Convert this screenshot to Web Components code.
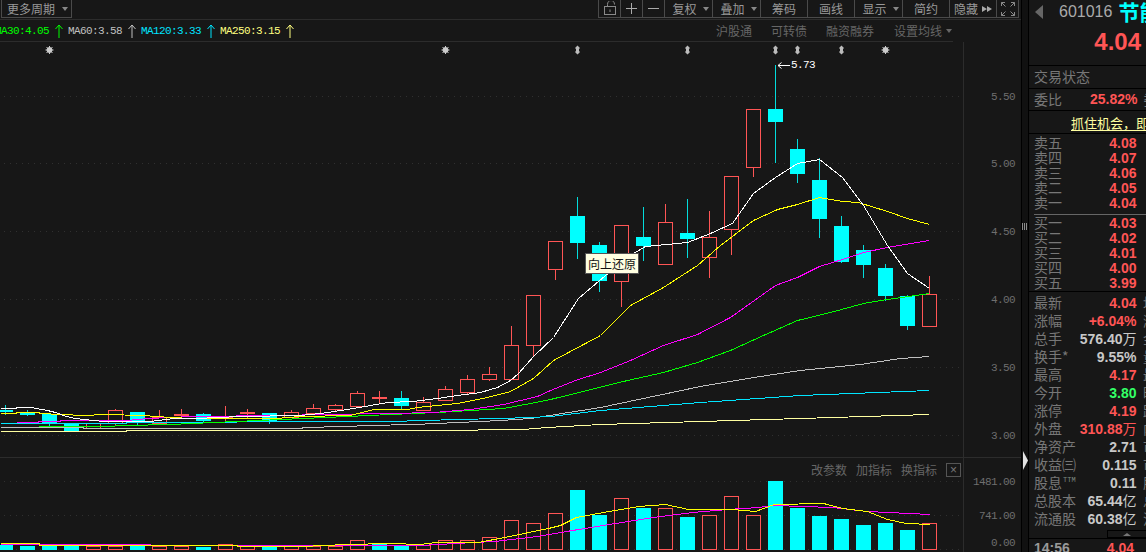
<!DOCTYPE html>
<html lang="zh">
<head>
<meta charset="utf-8">
<title>601016</title>
<style>
  html, body { margin: 0; height: 100%; background: #171717; overflow: hidden; }
  body { font-family: "Noto Sans CJK SC", "Liberation Sans", sans-serif; }
</style>
</head>
<body>
<stock-terminal>
  <chart-pane slot="chart">
    <chart-toolbar slot="toolbar">
      <tool-btn slot="tools" w="22" icon="lock"></tool-btn>
      <tool-btn slot="tools" w="22" icon="plus"></tool-btn>
      <tool-btn slot="tools" w="22" icon="minus"></tool-btn>
      <tool-btn slot="tools" w="48" caret>复权</tool-btn>
      <tool-btn slot="tools" w="48" caret>叠加</tool-btn>
      <tool-btn slot="tools" w="47">筹码</tool-btn>
      <tool-btn slot="tools" w="47">画线</tool-btn>
      <tool-btn slot="tools" w="48" caret>显示</tool-btn>
      <tool-btn slot="tools" w="47">简约</tool-btn>
      <tool-btn slot="tools" w="47" icon="more">隐藏</tool-btn>
      <tool-btn slot="tools" w="22" icon="full"></tool-btn>
    </chart-toolbar>
    <ma-legend slot="legend"></ma-legend>
    <price-chart slot="price"></price-chart>
    <volume-chart slot="volume"></volume-chart>
  </chart-pane>
  <split-bar slot="split"></split-bar>
  <quote-panel slot="quote">
    <quote-row slot="asks" value="4.08" tone="red">卖五</quote-row>
    <quote-row slot="asks" value="4.07" tone="red">卖四</quote-row>
    <quote-row slot="asks" value="4.06" tone="red">卖三</quote-row>
    <quote-row slot="asks" value="4.05" tone="red">卖二</quote-row>
    <quote-row slot="asks" value="4.04" tone="red">卖一</quote-row>
    <quote-row slot="bids" value="4.03" tone="red">买一</quote-row>
    <quote-row slot="bids" value="4.02" tone="red">买二</quote-row>
    <quote-row slot="bids" value="4.01" tone="red">买三</quote-row>
    <quote-row slot="bids" value="4.00" tone="red">买四</quote-row>
    <quote-row slot="bids" value="3.99" tone="red">买五</quote-row>
    <quote-row slot="stats" tall value="4.04" tone="red" side="均价">最新</quote-row>
    <quote-row slot="stats" tall value="+6.04%" tone="red" side="涨跌">涨幅</quote-row>
    <quote-row slot="stats" tall value="576.40" unit="万" side="金额">总手</quote-row>
    <quote-row slot="stats" tall value="9.55%" side="量比">换手*</quote-row>
    <quote-row slot="stats" tall value="4.17" tone="red" side="最低">最高</quote-row>
    <quote-row slot="stats" tall value="3.80" tone="green" side="昨收">今开</quote-row>
    <quote-row slot="stats" tall value="4.19" tone="red" side="跌停">涨停</quote-row>
    <quote-row slot="stats" tall value="310.88" unit="万" tone="red" side="内盘">外盘</quote-row>
    <quote-row slot="stats" tall value="2.71" side="市净">净资产</quote-row>
    <quote-row slot="stats" tall value="0.115" side="市盈">收益㈢</quote-row>
    <quote-row slot="stats" tall value="0.11" side="股息" ttm>股息</quote-row>
    <quote-row slot="stats" tall value="65.44" unit="亿" side="总值">总股本</quote-row>
    <quote-row slot="stats" tall value="60.38" unit="亿" side="流值">流通股</quote-row>
  </quote-panel>
</stock-terminal>

<script>
const RED = '#ff5555';
const CYAN = '#00ffff';
const NUM = '"Liberation Mono", "DejaVu Sans Mono", monospace';
const SANS = '"Liberation Sans", Arial, sans-serif';
const CJK = '"Noto Sans CJK SC", "Liberation Sans", sans-serif';

// candle: center x, body top, body bottom, wick high, wick low, up?
const CANDLES = [
  [5, 410, 411, 405, 414, 0], [27, 413, 414, 410, 415, 0], [49, 414, 422, 414, 426, 0],
  [71, 423, 431, 423, 431, 0], [93, 423, 428, 423, 428, 1], [115, 410, 423, 409, 425, 1],
  [137, 412, 422, 412, 424, 0], [159, 417, 423, 410, 424, 1], [181, 414, 415, 409, 416, 1],
  [203, 414, 420, 413, 421, 0], [225, 417, 418, 406, 420, 1], [247, 412, 413, 409, 417, 1],
  [269, 413, 420, 413, 423, 0], [291, 412, 417, 410, 417, 1], [313, 408, 413, 404, 413, 1],
  [335, 405, 409, 404, 410, 1], [357, 393, 406, 391, 406, 1], [379, 397, 398, 391, 402, 1],
  [401, 398, 405, 391, 408, 0], [423, 402, 410, 397, 410, 1], [445, 389, 400, 386, 400, 1],
  [467, 379, 392, 375, 394, 1], [489, 374, 379, 367, 380, 1], [511, 345, 379, 326, 379, 1],
  [533, 295, 345, 295, 356, 1], [555, 241, 269, 241, 279, 1], [577, 216, 242, 197, 258, 0],
  [599, 245, 280, 242, 291, 0], [621, 225, 281, 225, 306, 1], [643, 237, 245, 207, 260, 0],
  [665, 222, 264, 204, 264, 1], [687, 233, 238, 199, 257, 0], [709, 237, 257, 211, 277, 1],
  [731, 176, 229, 176, 254, 1], [753, 109, 167, 109, 176, 1], [775, 109, 121, 65, 162, 0],
  [797, 149, 173, 139, 182, 0], [819, 180, 218, 158, 237, 0], [841, 226, 261, 216, 262, 0],
  [863, 250, 264, 245, 277, 0], [885, 268, 295, 264, 300, 0], [907, 296, 325, 295, 329, 0],
  [929, 294, 326, 276, 326, 1]
];

const MA_LINES = [
  ['#ffffa0', [[0,431],[126,431],[126,430],[433,430],[523,429],[547,427],[600,424],[700,421],[800,418],[929,414]]],
  ['#c0c0c0', [[0,427],[83,427],[83,428],[302,428],[302,427],[346,426],[368,425],[413,424],[437,423],[457,422],[480,421],[500,420],[530,418],[600,407],[700,386],[760,376],[800,370],[860,364],[900,358],[929,356]]],
  ['#00e5ff', [[0,423],[126,423],[126,422],[236,422],[236,421],[390,421],[457,419],[500,418],[530,417],[550,416],[600,410],[700,402],[800,395],[929,390]]],
  ['#00ff00', [[38,426],[104,426],[126,425],[170,424],[192,423],[258,420],[303,418],[347,416],[390,414],[437,412],[470,410],[503,408],[530,403],[550,399],[627,380],[663,372],[697,362],[730,350],[763,335],[797,320],[830,312],[863,303],[887,299],[929,293]]],
  ['#ff00ff', [[16,422],[38,422],[38,421],[60,421],[60,420],[126,420],[148,418],[170,417],[192,416],[280,415],[323,414],[390,413],[433,412],[470,409],[503,404],[537,396],[550,390],[575,380],[600,372],[630,360],[663,345],[697,334],[730,317],[775,285],[797,277],[819,266],[842,259],[863,252],[887,247],[929,240]]],
  ['#ffff00', [[0,413],[16,413],[16,412],[39,412],[39,413],[61,414],[83,415],[104,414],[143,415],[170,417],[193,418],[275,418],[300,416],[350,415],[373,409],[407,409],[417,407],[437,405],[457,403],[487,397],[510,391],[533,378],[553,360],[600,335],[630,305],[663,287],[697,265],[720,245],[753,220],[777,209],[797,204],[819,197],[842,201],[858,202],[887,211],[907,218],[929,224]]],
  ['#ffffff', [[0,408],[16,408],[16,407],[30,407],[36,408],[47,410],[55,412],[66,416],[75,418],[83,419],[104,421],[150,421],[165,419],[175,418],[195,418],[240,416],[300,415],[320,413],[347,409],[370,405],[387,402],[413,401],[437,398],[457,395],[480,392],[497,387],[510,380],[518,373],[533,356],[553,337],[578,298],[605,275],[630,255],[645,246],[687,242],[710,233],[732,223],[753,193],[775,177],[797,163],[819,159],[842,177],[863,205],[887,245],[907,273],[929,288]]]
];

// volume: center x, top, up?
const VOLUMES = [
  [5,545,0],[27,546,0],[49,545,0],[71,546,0],[93,546,1],[115,546,1],[137,546,0],[159,546,1],[181,546,1],
  [203,547,0],[225,544,1],[247,546,1],[269,547,0],[291,546,1],[313,546,1],[335,546,1],[357,540,1],[379,543,0],
  [401,545,0],[423,545,1],[445,540,1],[467,540,1],[489,537,1],[511,520,1],[533,523,1],[555,513,1],[577,490,0],
  [599,515,0],[621,498,1],[643,508,0],[665,508,1],[687,517,0],[709,515,1],[731,496,1],[753,515,1],[775,481,0],
  [797,508,0],[819,516,0],[841,519,0],[863,525,0],[885,523,0],[907,530,0],[929,523,1]
];

const VOL_LINES = [
  ['#ff00ff', [[0,544],[150,544],[150,545],[420,545],[455,543],[494,541],[537,536],[572,530],[615,523],[653,517],[692,512],[727,509],[758,507],[774,505],[832,507],[867,511],[930,514]]],
  ['#ffff00', [[0,543],[39,543],[39,545],[237,545],[237,546],[302,546],[346,544],[390,543],[420,544],[436,542],[478,542],[504,537],[548,528],[560,525],[576,517],[603,512],[638,506],[665,504],[688,509],[731,509],[755,511],[774,504],[823,503],[842,508],[867,511],[887,519],[906,523],[930,524]]]
];

const linePoints = pts => pts.map(p => `${p[0] + 0.5},${p[1] + 0.5}`).join(' ');

function polylines(list) {
  return list.map(([color, pts]) =>
    `<polyline points="${linePoints(pts)}" fill="none" stroke="${color}" stroke-width="1"/>`).join('');
}

function gridLine(y) {
  return `<line x1="4" x2="962" y1="${y + 0.5}" y2="${y + 0.5}" stroke="#303030" stroke-dasharray="1 5"/>`;
}

function axisLabel(y, text) {
  return `<text x="1015" y="${y + 4}" text-anchor="end" class="axis">${text}</text>`;
}

function candleShape([x, top, bottom, high, low, up]) {
  const color = up ? RED : CYAN;
  const wick = `<line x1="${x + 0.5}" x2="${x + 0.5}" y1="${high}" y2="${low + 1}" stroke="${color}" stroke-opacity="${up ? 1 : 0.85}"/>`;
  const left = x === 5 ? 0 : x - 7;
  const body = up
    ? `<rect x="${x - 6.5}" y="${top + 0.5}" width="14" height="${bottom - top}" fill="#171717" stroke="${color}"/>`
    : `<rect x="${left}" y="${top}" width="${x + 8 - left}" height="${bottom - top + 1}" fill="${color}"/>`;
  return wick + body;
}

class ToolBtn extends HTMLElement {
  connectedCallback() {
    const w = this.getAttribute('w') || 47;
    const icon = this.getAttribute('icon');
    const icons = {
      lock: `<svg width="16" height="16" viewBox="0 0 16 16" fill="none" stroke="#8a8a8a"><path d="M5.5 6V3.5C5.5 1 7 -.5 9 -.5s3.5 1.500 3.500 4"/><rect x="2.500" y="5.500" width="11" height="8"/><path d="M8 8.500v2.500"/></svg>`,
      plus: `<svg width="12" height="12" viewBox="0 0 12 12" stroke="#aaa"><path d="M0 5.500h11M5.500 0v11"/></svg>`,
      minus: `<svg width="12" height="12" viewBox="0 0 12 12" stroke="#aaa"><path d="M0 5.500h11"/></svg>`,
      more: `<svg width="10" height="6" viewBox="0 0 10 6" fill="#aaa"><path d="M0 0l5 3-5 3zM5 0l5 3-5 3z"/></svg>`,
      full: `<svg width="14" height="14" viewBox="0 0 14 14" fill="none" stroke="#8a8a8a"><path d="M.5 4V.5H4M.5.500l4 4M13.500 4V.5H10M13.500.500l-4 4M.5 10v3.500H4M.5 13.500l4-4M13.500 10v3.500H10M13.500 13.500l-4-4"/></svg>`
    };
    this.attachShadow({ mode: 'open' }).innerHTML = `
      <style>
        :host {
          display: flex; align-items: center; justify-content: center; gap: 4px;
          box-sizing: border-box; width: ${w}px; height: 18px;
          border-right: 1px solid #4a4a4a; padding-left: ${this.hasAttribute('caret') ? 4 : 0}px;
          color: #999; font: 12px/16px ${CJK}; white-space: nowrap;
        }
        .caret { width: 0; height: 0; margin-left: 2px; border: 3.500px solid transparent; border-top: 4px solid #888; border-bottom: 0; }
        svg { display: block; }
      </style>
      <slot></slot>
      ${this.hasAttribute('caret') ? '<span class="caret"></span>' : ''}
      ${icon ? icons[icon] : ''}
    `;
  }
}
customElements.define('tool-btn', ToolBtn);

class ChartToolbar extends HTMLElement {
  connectedCallback() {
    this.attachShadow({ mode: 'open' }).innerHTML = `
      <style>
        :host {
          display: flex; justify-content: space-between; box-sizing: border-box;
          height: 20px; border-bottom: 1px solid #2c2c2c; padding: 0 1px 0 1px;
        }
        .period {
          display: flex; align-items: center; box-sizing: border-box; width: 71px; height: 18px;
          border: 1px solid #4a4a4a; border-top: 0; padding-left: 5px; gap: 7px;
          color: #999; font: 12px/16px ${CJK};
        }
        .period i { width: 0; height: 0; border: 3.500px solid transparent; border-top: 4px solid #888; border-bottom: 0; }
        .tools { display: flex; height: 18px; box-sizing: border-box; border: 1px solid #4a4a4a; border-top: 0; border-right-width: 0; margin-right: 1px; }
      </style>
      <div class="period">更多周期<i></i></div>
      <div class="tools"><slot name="tools"></slot></div>
    `;
  }
}
customElements.define('chart-toolbar', ChartToolbar);

class MaLegend extends HTMLElement {
  connectedCallback() {
    const items = [
      ['MA30:4.05', '#00ff00'], ['MA60:3.58', '#c0c0c0'],
      ['MA120:3.33', '#00e5ff'], ['MA250:3.15', '#ffff80']
    ];
    const links = ['沪股通', '可转债', '融资融券'];
    this.attachShadow({ mode: 'open' }).innerHTML = `
      <style>
        :host {
          display: flex; align-items: center; box-sizing: border-box; width: 953px; height: 22px;
          border-bottom: 1px solid #2c2c2c; overflow: hidden; white-space: nowrap;
        }
        .ma { display: flex; align-items: center; gap: 5.500px; margin-left: -5px; font: 11px/14px ${NUM}; letter-spacing: -.6px; }
        .ma span { display: flex; align-items: center; gap: 5.500px; }
        .ma svg { display: block; }
        .links { display: flex; align-items: center; gap: 19px; margin-left: auto; color: #666; font: 12px/16px ${CJK}; }
        .links .set { margin-left: 1px; }
        .links i { display: inline-block; width: 0; height: 0; margin: 0 1px 2px 4px; vertical-align: middle; border: 3px solid transparent; border-top: 4px solid #666; border-bottom: 0; }
      </style>
      <div class="ma">
        ${items.map(([t, c]) => `<span style="color:${c}">${t}<svg width="8" height="14" viewBox="0 0 8 14" fill="none" stroke="${c}"><path d="M4 14V1M.5 5L4 1l3.500 4"/></svg></span>`).join('')}
      </div>
      <div class="links">
        ${links.map(t => `<span>${t}</span>`).join('')}
        <span class="set">设置均线<i></i></span>
      </div>
    `;
  }
}
customElements.define('ma-legend', MaLegend);

class PriceChart extends HTMLElement {
  connectedCallback() {
    const star = x => `<g stroke="#ccc" fill="#ccc"><circle cx="${x + 0.5}" cy="50" r="2.500"/><path d="M${x + 0.5} 46v8M${x - 3.500} 50h8M${x - 2.500} 47l6 6M${x + 3.500} 47l-6 6" fill="none"/></g>`;
    const mark = x => `<path d="M${x + 0.5} 45.500l2.500 2.500-1 1v2l1 1-2.500 2.500-2.500-2.500 1-1v-2l-1-1z" fill="#bbb"/>`;
    const grid = [96, 163, 231, 299, 367, 435];
    const labels = ['5.50', '5.00', '4.50', '4.00', '3.50', '3.00'];
    this.attachShadow({ mode: 'open' }).innerHTML = `
      <style>
        :host { display: block; position: relative; height: 415px; }
        svg { display: block; }
        .axis { fill: #6e6e6e; font: 11px ${NUM}; letter-spacing: -.6px; }
        .high { fill: #fff; font: 11px ${NUM}; letter-spacing: -.6px; }
        .tip {
          position: absolute; left: 585px; top: 211px; box-sizing: border-box; width: 54px; height: 21px;
          border: 1px solid #555; background: #ffffe1; color: #111;
          font: 12px/19px ${CJK}; text-align: center; white-space: nowrap;
        }
      </style>
      <svg width="1021" height="415" viewBox="0 42 1021 415">
        <g shape-rendering="crispEdges">
          ${grid.map(gridLine).join('')}
          <line x1="963.5" x2="963.5" y1="42" y2="457" stroke="#2c2c2c"/>
          ${CANDLES.map(candleShape).join('')}
          ${polylines(MA_LINES)}
        </g>
        ${grid.map((y, i) => axisLabel(y, labels[i])).join('')}
        ${[49, 445, 885].map(star).join('')}
        ${[577, 687, 775, 797, 841].map(mark).join('')}
        <path d="M790 65.500h-12M781.500 62.500l-3.500 3 3.500 3" fill="none" stroke="#fff"/>
        <text x="791" y="68" class="high">5.73</text>
      </svg>
      <div class="tip">向上还原</div>
    `;
  }
}
customElements.define('price-chart', PriceChart);

class VolumeChart extends HTMLElement {
  connectedCallback() {
    const bars = VOLUMES.map(([x, top, up]) => {
      const left = x === 5 ? 0 : x - 7;
      return up
        ? `<rect x="${x - 6.5}" y="${top + 0.5}" width="14" height="${549 - top}" fill="#171717" stroke="${RED}"/>`
        : `<rect x="${left}" y="${top}" width="${x + 8 - left}" height="${550 - top}" fill="${CYAN}"/>`;
    }).join('');
    this.attachShadow({ mode: 'open' }).innerHTML = `
      <style>
        :host { display: block; position: relative; box-sizing: border-box; height: 95px; border-top: 1px solid #2c2c2c; }
        svg { display: block; }
        .axis { fill: #6e6e6e; font: 11px ${NUM}; letter-spacing: -.6px; }
        .actions {
          position: absolute; left: 811px; top: 4px; display: flex; align-items: center; gap: 9px;
          color: #666; font: 12px/16px ${CJK}; white-space: nowrap;
        }
        .close {
          box-sizing: border-box; width: 15px; height: 14px; border: 1px solid #555;
          color: #777; font: 12px/12px ${SANS}; text-align: center;
        }
      </style>
      <svg width="1021" height="94" viewBox="0 458 1021 94">
        <g shape-rendering="crispEdges">
          ${[481, 515, 549].map(gridLine).join('')}
          <line x1="963.5" x2="963.5" y1="458" y2="552" stroke="#2c2c2c"/>
          ${bars}
          ${polylines(VOL_LINES)}
        </g>
        ${axisLabel(481, '1481.00')}${axisLabel(515, '741.00')}${axisLabel(542, '0.00')}
      </svg>
      <div class="actions"><span>改参数</span><span>加指标</span><span>换指标</span><span class="close">×</span></div>
    `;
  }
}
customElements.define('volume-chart', VolumeChart);

class ChartPane extends HTMLElement {
  connectedCallback() {
    this.attachShadow({ mode: 'open' }).innerHTML = `
      <style>:host { display: flex; flex-direction: column; width: 1021px; height: 552px; overflow: hidden; }</style>
      <slot name="toolbar"></slot>
      <slot name="legend"></slot>
      <slot name="price"></slot>
      <slot name="volume"></slot>
    `;
  }
}
customElements.define('chart-pane', ChartPane);

class SplitBar extends HTMLElement {
  connectedCallback() {
    this.attachShadow({ mode: 'open' }).innerHTML = `
      <style>
        :host {
          display: flex; flex-direction: column; align-items: center; box-sizing: border-box;
          width: 8px; height: 552px; padding-top: 223px; gap: 221px;
          background: #111; border-left: 1px solid #000; border-right: 1px solid #000;
        }
        svg { display: block; }
      </style>
      <svg width="6" height="7" viewBox="0 0 6 7" fill="#8a8a8a" shape-rendering="crispEdges"><path d="M0 0h1v7H0zM2 0h1v7H2zM4 0h1v7H4z"/></svg>
      <svg width="5" height="19" viewBox="0 0 5 19" fill="#e0e0e0"><path d="M0 0l5 9.500-5 9.500z"/></svg>
    `;
  }
}
customElements.define('split-bar', SplitBar);

class QuoteRow extends HTMLElement {
  connectedCallback() {
    const tall = this.hasAttribute('tall');
    const tones = { red: RED, green: '#33ff66' };
    const color = tones[this.getAttribute('tone')] || '#c8c8c8';
    const unit = this.getAttribute('unit');
    const side = this.getAttribute('side') || '';
    this.attachShadow({ mode: 'open' }).innerHTML = `
      <style>
        :host {
          display: grid; grid-template-columns: auto 1fr 3px; column-gap: 6.500px; align-items: center;
          height: ${tall ? 18 : 15}px; padding-left: 5px;
          color: #777; font: 14px/15px ${CJK}; white-space: nowrap;
        }
        .label { margin-bottom: 2px; }
        .val { justify-self: end; color: ${color}; font: bold 14px/15px ${SANS}; }
        .val b { font: 14px/15px ${CJK}; }
        .side { overflow: hidden; margin-bottom: 2px; }
        sup { font: 7px/7px ${NUM}; color: #7b8a80; vertical-align: 6px; margin-left: 1px; }
      </style>
      <span class="label"><slot></slot>${this.hasAttribute('ttm') ? '<sup>TTM</sup>' : ''}</span>
      <span class="val">${this.getAttribute('value')}${unit ? `<b>${unit}</b>` : ''}</span>
      <span class="side">${side}</span>
    `;
  }
}
customElements.define('quote-row', QuoteRow);

class QuotePanel extends HTMLElement {
  connectedCallback() {
    this.attachShadow({ mode: 'open' }).innerHTML = `
      <style>
        :host {
          display: flex; flex-direction: column; box-sizing: border-box; width: 117px; height: 552px;
          overflow: hidden; color: #777; font: 14px/15px ${CJK};
        }
        .head { box-sizing: border-box; height: 66px; border-bottom: 1px solid #000; flex: none; }
        .title { display: flex; align-items: center; height: 24px; padding-left: 6px; white-space: nowrap; }
        .title svg { display: block; flex: none; margin-right: 16px; }
        .code { color: #aaa; font: 16px/20px ${SANS}; margin-right: 6px; }
        .name { color: ${CYAN}; font: bold 21px/22px ${CJK}; margin-top: -3px; }
        .price { color: ${RED}; font: bold 24px/28px ${SANS}; text-align: right; padding: 4px 5px 0 0; }
        .line { box-sizing: border-box; border-bottom: 1px solid #000; flex: none; display: flex; align-items: center; padding-left: 5px; white-space: nowrap; }
        .state { padding-bottom: 2px; }
        .ratio b { margin-left: 28px; color: ${RED}; font: bold 14px/15px ${SANS}; }
        .ratio span { margin-left: 6px; }
        .notice { padding-left: 42px; color: #ffffa0; font-size: 13px; text-decoration: underline; text-underline-offset: 2px; }
        .asks { flex: none; height: 80px; padding-top: 1px; box-sizing: border-box; }
        .rule { flex: none; height: 1px; margin-left: 5px; background: #666; }
        .bids { flex: none; height: 77px; padding-top: 0; box-sizing: border-box; border-bottom: 1px solid #000; }
        .stats { flex: none; height: 238px; padding-top: 2px; box-sizing: border-box; }
        .handle { flex: none; height: 8px; margin-left: 78px; box-sizing: border-box; border: 1px solid #000; border-right: 0; display: flex; justify-content: center; align-items: center; }
        .handle i { width: 0; height: 0; border: 4px solid transparent; border-bottom: 3px solid #777; border-top: 0; }
        .time { flex: none; display: flex; align-items: center; height: 18px; border-top: 1px solid #000; padding-left: 5px; font: bold 14px/18px ${SANS}; white-space: nowrap; }
        .time span { color: #999; }
        .time b { color: ${RED}; margin-left: 37px; }
      </style>
      <div class="head">
        <div class="title">
          <svg width="8" height="14" viewBox="0 0 8 14" fill="#666"><path d="M8 0v14L0 7z"/></svg>
          <span class="code">601016</span><span class="name">节能风电</span>
        </div>
        <div class="price">4.04</div>
      </div>
      <div class="line state" style="height:23px">交易状态</div>
      <div class="line ratio" style="height:22px">委比<b>25.82%</b><span>委差</span></div>
      <div class="line notice" style="height:23px">抓住机会，即刻买入</div>
      <div class="asks"><slot name="asks"></slot></div>
      <div class="rule"></div>
      <div class="bids"><slot name="bids"></slot></div>
      <div class="stats"><slot name="stats"></slot></div>
      <div class="handle"><i></i></div>
      <div class="time"><span>14:56</span><b>4.04</b></div>
    `;
  }
}
customElements.define('quote-panel', QuotePanel);

class StockTerminal extends HTMLElement {
  connectedCallback() {
    this.attachShadow({ mode: 'open' }).innerHTML = `
      <style>:host { display: flex; width: 1146px; height: 552px; background: #171717; overflow: hidden; }</style>
      <slot name="chart"></slot>
      <slot name="split"></slot>
      <slot name="quote"></slot>
    `;
  }
}
customElements.define('stock-terminal', StockTerminal);
</script>
</body>
</html>
